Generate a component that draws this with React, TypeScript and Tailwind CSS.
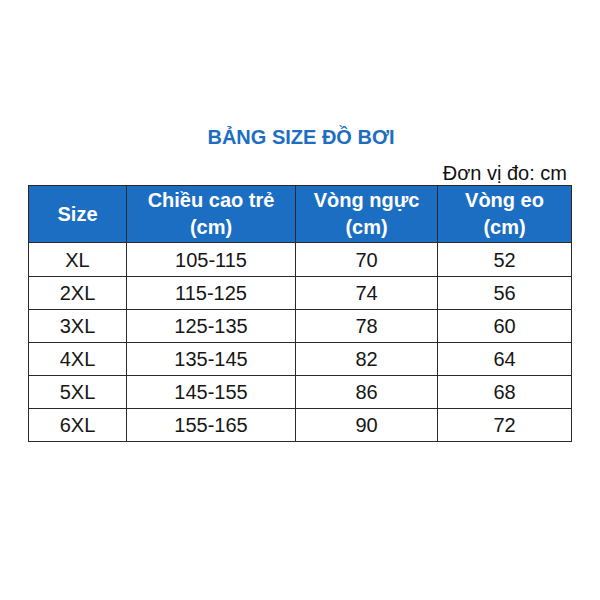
import React from "react";

const rows = [
  ["XL", "105-115", "70", "52"],
  ["2XL", "115-125", "74", "56"],
  ["3XL", "125-135", "78", "60"],
  ["4XL", "135-145", "82", "64"],
  ["5XL", "145-155", "86", "68"],
  ["6XL", "155-165", "90", "72"],
];

export default function App() {
  return (
    <div
      className="w-[600px] h-[600px] bg-white pt-[125px]"
      style={{ fontFamily: '"Liberation Sans", Arial, sans-serif' }}
    >
      <div className="text-center text-[20px] leading-[24px] font-bold text-[#1d6ec0] pl-[2px]">
        BẢNG SIZE ĐỒ BƠI
      </div>
      <div className="mt-[12px] h-[24px] text-right text-[20px] leading-[24px] text-[#111] pr-[33px]">
        Đơn vị đo: cm
      </div>
      <div className="ml-[28px] w-[544px] grid grid-cols-[98px_169px_142px_134px] border-l border-t border-[#2a2a2a]">
        {[
          ["Size"],
          ["Chiều cao trẻ", "(cm)"],
          ["Vòng ngực", "(cm)"],
          ["Vòng eo", "(cm)"],
        ].map((h, i) => (
          <div
            key={i}
            className="h-[57px] bg-[#1b6ec2] border-r border-b border-[#2a2a2a] flex flex-col items-center justify-center text-white font-bold text-[20px] leading-[27px]"
          >
            {h.map((l, j) => (
              <span key={j}>{l}</span>
            ))}
          </div>
        ))}
        {rows.map((r, ri) =>
          r.map((c, ci) => (
            <div
              key={`${ri}-${ci}`}
              className={`${ri === 0 ? "h-[34px]" : "h-[33px]"} border-r border-b border-[#2a2a2a] flex items-center justify-center text-[20px] leading-[24px] text-[#161616]`}
            >
              {c}
            </div>
          ))
        )}
      </div>
    </div>
  );
}
